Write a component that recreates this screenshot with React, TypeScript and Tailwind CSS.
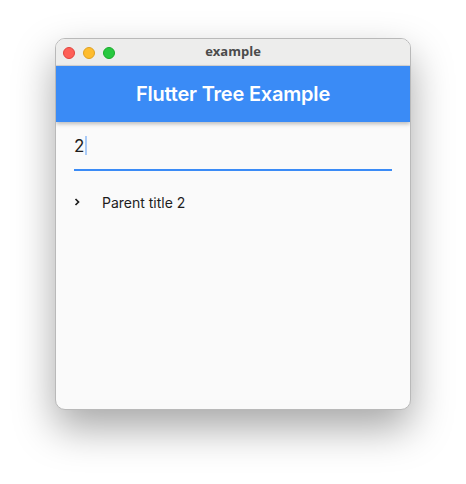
import React from "react"

const TrafficLights: React.FC = () => (
  <div className="absolute left-[7px] top-[8px] flex gap-[8px]">
    <span className="w-[12px] h-[12px] rounded-full bg-[#fe5f57] border border-[#e0443e]" />
    <span className="w-[12px] h-[12px] rounded-full bg-[#febc2e] border border-[#dea123]" />
    <span className="w-[12px] h-[12px] rounded-full bg-[#28c840] border border-[#1aab29]" />
  </div>
)

const App: React.FC = () => {
  return (
    <div className="w-[466px] h-[484px] bg-white flex pl-[55px] pt-[38px]" style={{ fontFamily: "Inter, Roboto, sans-serif" }}>
      <div className="w-[356px] h-[372px] rounded-[10px] border border-[#b9b9b9] overflow-hidden flex flex-col bg-[#fafafa] shadow-[0_18px_40px_rgba(0,0,0,0.35)]">
        <div className="relative h-[27px] shrink-0 bg-[#ededec] border-b border-[#d4d4d4] flex items-center justify-center">
          <TrafficLights />
          <span className="text-[13px] font-bold text-[#4b4b4b]" style={{ fontFamily: "'Open Sans', sans-serif" }}>example</span>
        </div>
        <div className="relative z-10 h-[56px] shrink-0 bg-[#3a8bf6] flex items-center justify-center shadow-[0_2px_4px_rgba(0,0,0,0.25)]">
          <span className="text-[20px] font-semibold text-white tracking-[-0.2px]">Flutter Tree Example</span>
        </div>
        <div className="pl-[18px] pr-[18px] flex flex-col">
          <div className="pt-[13px] h-[49px] border-b-2 border-[#3a8bf6] flex items-start">
            <span className="text-[17px] leading-[22px] text-[#1d1d1d]">2</span>
            <span className="ml-[1px] mt-[1px] w-[2px] h-[19px] bg-[#a9cbf8]" />
          </div>
          <div className="h-[62px] flex items-center">
            <svg width="8" height="10" viewBox="0 0 8 10">
              <path d="M1.5 2 L4.5 5 L1.5 8" fill="none" stroke="#1d1d1d" strokeWidth="1.7" />
            </svg>
            <span className="ml-[20px] text-[14px] text-[#1d1d1d]">Parent title 2</span>
          </div>
        </div>
      </div>
    </div>
  )
}

export default App
